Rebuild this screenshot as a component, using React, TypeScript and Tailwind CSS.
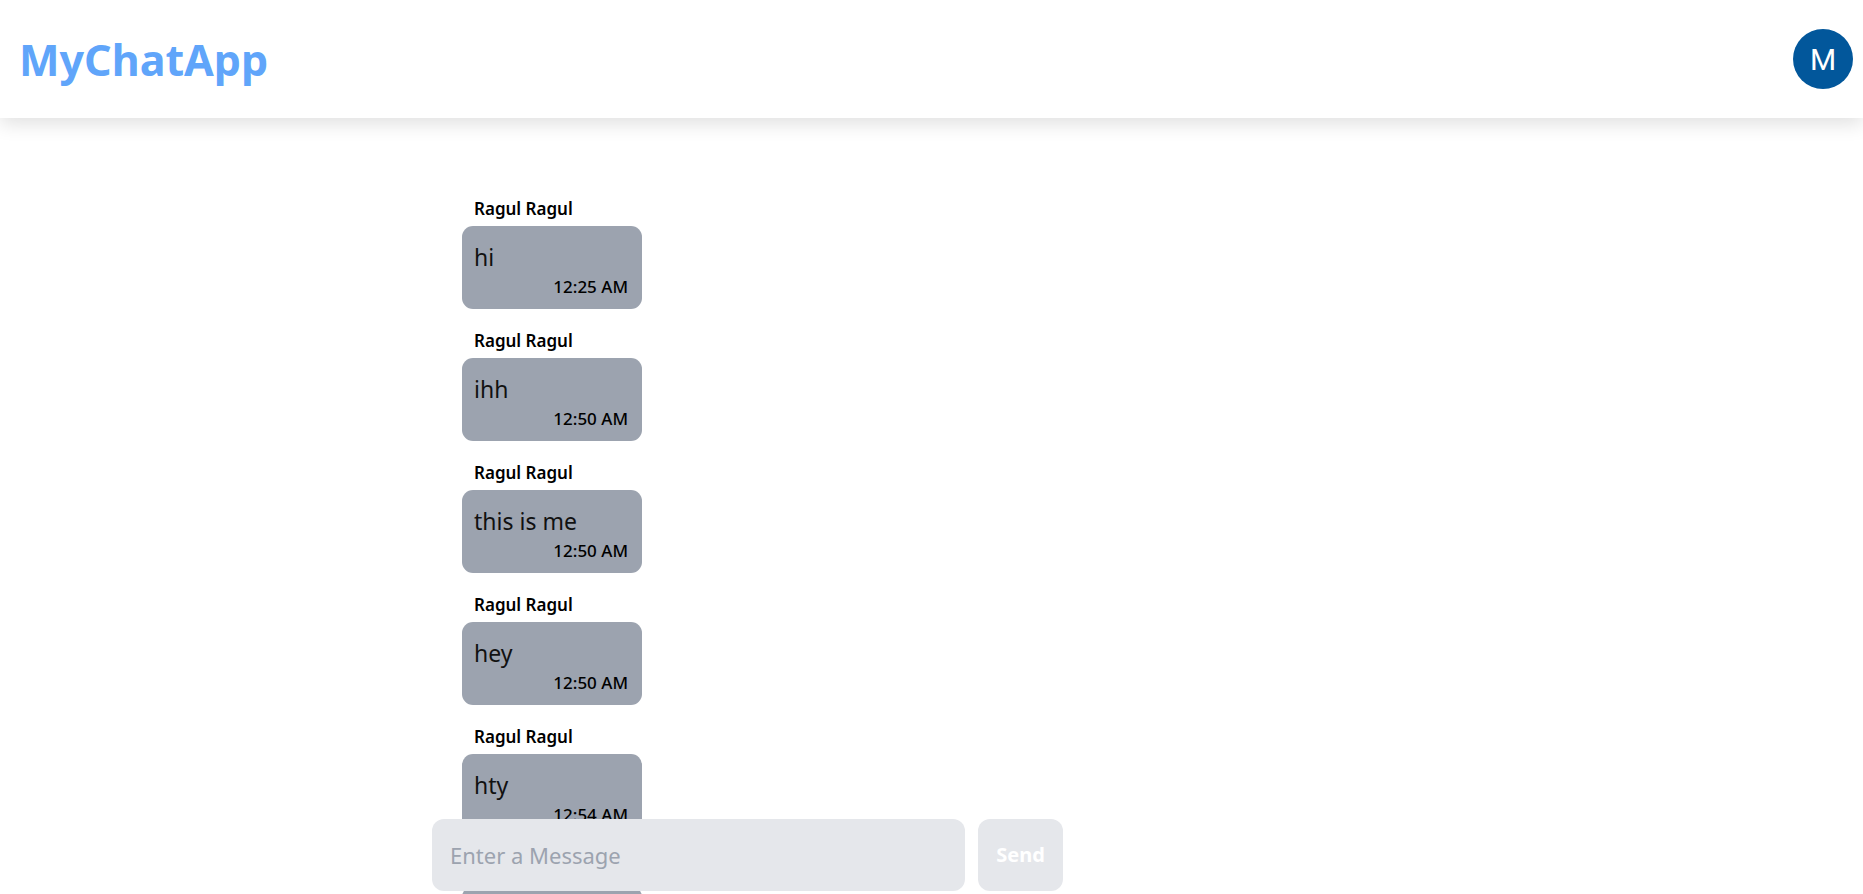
import { useState } from "react";

type Message = {
  id: number;
  sender: string;
  text: string;
  time: string;
};

const messages: Message[] = [
  { id: 1, sender: "Ragul Ragul", text: "hi", time: "12:25 AM" },
  { id: 2, sender: "Ragul Ragul", text: "ihh", time: "12:50 AM" },
  { id: 3, sender: "Ragul Ragul", text: "this is me", time: "12:50 AM" },
  { id: 4, sender: "Ragul Ragul", text: "hey", time: "12:50 AM" },
  { id: 5, sender: "Ragul Ragul", text: "hty", time: "12:54 AM" },
  { id: 6, sender: "Ragul Ragul", text: "hello", time: "12:55 AM" },
];

const ChatBubble = ({ msg }: { msg: Message }) => (
  <div className="flex flex-col items-start mb-[20px]">
    <span className="pl-[12px] text-[17px] leading-[24px] font-semibold text-black">
      {msg.sender}
    </span>
    <div className="mt-[5px] w-[180px] bg-[#9ca3af] rounded-[11px] pl-[12px] pr-[14px] pt-[16px] pb-[11px]">
      <p className="text-[23px] leading-[30px] text-[#111]">{msg.text}</p>
      <p className="mt-1 text-right text-[17px] leading-[22px] font-medium text-black">
        {msg.time}
      </p>
    </div>
  </div>
);

const App = () => {
  const [draft, setDraft] = useState("");

  return (
    <div
      className="h-screen overflow-hidden flex flex-col bg-white"
      style={{ fontFamily: '"Noto Sans", "Open Sans", sans-serif' }}
    >
      {/* Header */}
      <header className="relative z-10 h-[118px] shrink-0 flex items-center justify-between pl-[19px] pr-[10px] bg-white shadow-[0_6px_18px_rgba(0,0,0,0.12)]">
        <h1 className="text-[43px] font-bold text-[#60a5fa] leading-none">
          MyChatApp
        </h1>
        <div
          className="w-[60px] h-[60px] rounded-full bg-[#02579b] flex items-center justify-center text-white text-[30px]"
          style={{ fontFamily: "Roboto, sans-serif" }}
        >
          M
        </div>
      </header>

      {/* Chat area */}
      <main className="relative flex-1 overflow-hidden">
        <div className="ml-[462px] pt-[79px] flex flex-col">
          {messages.map((m) => (
            <ChatBubble key={m.id} msg={m} />
          ))}
        </div>

        {/* Composer */}
        <div className="absolute bottom-[3px] left-[432px] flex gap-[13px]">
          <input
            value={draft}
            onChange={(e) => setDraft(e.target.value)}
            placeholder="Enter a Message"
            className="w-[533px] h-[72px] rounded-xl bg-[#e5e7eb] px-[18px] text-[22px] text-black placeholder:text-[#9ca3af] outline-none"
          />
          <button className="w-[85px] h-[72px] rounded-xl bg-[#e5e7eb] text-white font-bold text-[20px]">
            Send
          </button>
        </div>
      </main>
    </div>
  );
};

export default App;
